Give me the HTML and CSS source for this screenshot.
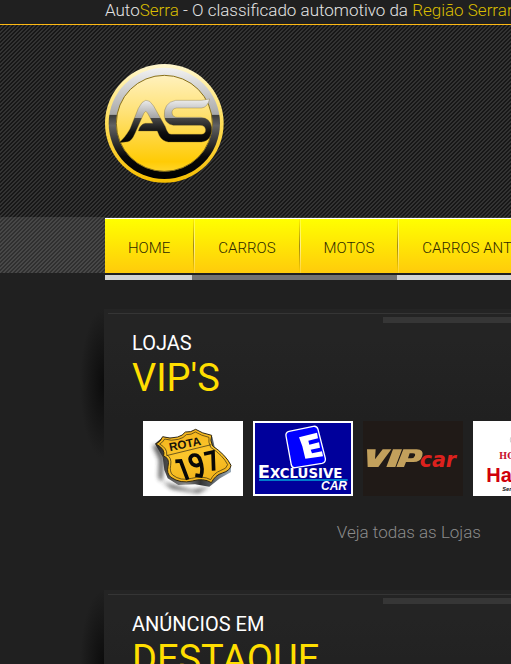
FILE: index.html
```html
<!DOCTYPE html>
<html lang="pt-BR">
<head>
<meta charset="utf-8">
<title>AutoSerra</title>
<link rel="stylesheet" href="styles.css">
</head>
<body>
<div class="topbar">Auto<span class="accent">Serra</span> - O classificado automotivo da <span class="accent">Região Serrana</span></div>
<header class="header">
  <a class="logo" href="#" aria-label="AutoSerra">
    <svg width="119" height="119" viewBox="30 27 357 357" aria-hidden="true">
      <defs>
        <linearGradient id="rim" x1="0" y1="0" x2="0" y2="1"><stop offset="0" stop-color="#fff7cf"/><stop offset=".45" stop-color="#ffe060"/><stop offset="1" stop-color="#f5bd00"/></linearGradient>
        <linearGradient id="ring" x1="0" y1="0" x2="0" y2="1"><stop offset="0" stop-color="#f2f2f2"/><stop offset=".42" stop-color="#a9a9a9"/><stop offset=".425" stop-color="#3b3b3b"/><stop offset=".52" stop-color="#626262"/><stop offset=".8" stop-color="#080808"/><stop offset="1" stop-color="#000"/></linearGradient>
        <linearGradient id="disc" x1="0" y1="0" x2="0" y2="1"><stop offset="0" stop-color="#fff1bd"/><stop offset=".4" stop-color="#ffe173"/><stop offset=".9" stop-color="#ffcb05"/><stop offset="1" stop-color="#ffd52a"/></linearGradient>
        <linearGradient id="mono" gradientUnits="userSpaceOnUse" x1="0" y1="132" x2="0" y2="265"><stop offset="0" stop-color="#f0f0f0"/><stop offset=".42" stop-color="#a5a5a5"/><stop offset=".43" stop-color="#484848"/><stop offset=".75" stop-color="#101010"/><stop offset="1" stop-color="#000"/></linearGradient>
      </defs>
      <circle cx="208" cy="205" r="178" fill="url(#rim)"/>
      <circle cx="208" cy="205" r="167" fill="url(#ring)"/>
      <circle cx="208" cy="205" r="144" fill="url(#disc)" stroke="#88701b" stroke-width="3"/>
      <g fill="url(#mono)" stroke="#75601d" stroke-opacity=".5" stroke-width="2">
        <path d="M72 263 Q91 247 105 222 L130 160 Q152 115 176 153 L211 215 Q218 238 229 238 H319 Q332 237 332 224 Q330 211 315 211 H235 Q211 207 208 184 Q205 143 242 136 H320 L344 132 Q337 158 319 159 H245 Q230 161 231 174 Q233 187 247 187 H318 Q347 190 350 217 Q351 258 319 261 H220 Q202 258 193 242 L187 228 H130 Q135 208 151 205 H174 L157 173 Q152 165 147 174 L120 235 Q110 259 98 260 Z"/>
      </g>
    </svg>
  </a>
</header>
<div class="navband">
  <nav class="nav">
    <a href="#">HOME</a><a href="#">CARROS</a><a href="#">MOTOS</a><a href="#">CARROS ANTIGOS</a>
  </nav>
</div>
<div class="underline"><span class="underline-mid"></span></div>
<main class="main">
  <section class="panel">
    <div class="tab"></div>
    <h2 class="title"><span class="title-small">LOJAS</span><span class="title-big">VIP'S</span></h2>
    <div class="stores">
      <a class="store" href="#">
        <svg viewBox="24 18 300 225" role="img" aria-label="Rota 197">
          <defs>
            <linearGradient id="shield" x1="0" y1="0" x2=".3" y2="1"><stop offset="0" stop-color="#f2ae16"/><stop offset=".55" stop-color="#fbc62c"/><stop offset="1" stop-color="#f3b51c"/></linearGradient>
            <linearGradient id="side" x1="0" y1="0" x2="1" y2="0"><stop offset="0" stop-color="#222"/><stop offset=".4" stop-color="#888"/><stop offset=".6" stop-color="#333"/><stop offset="1" stop-color="#9aabb8"/></linearGradient>
            <filter id="soft" x="-20%" y="-20%" width="140%" height="140%"><feGaussianBlur stdDeviation="6"/></filter>
          </defs>
          <path d="M24 18h300v225H24z" fill="#fff"/>
          <path d="M52 92L74 88L88 128L82 200L170 225L225 215L190 235L110 222L70 190L72 134Z" fill="#333" opacity=".75" filter="url(#soft)"/>
          <path d="M60 86L83 67L130 70L182 50L232 65L239 96Q262 118 288 150V171L255 190L223 215L180 208L130 210L98 190L88 165L83 126Z" fill="url(#side)"/>
          <path d="M63 87Q77 80 83 65Q104 73 128 66Q143 62 151 51Q167 53 182 43Q200 55 230 61Q224 76 233 93Q272 119 288 151Q286 167 262 174Q241 180 229 203Q205 188 172 198Q137 207 108 187Q94 176 99 154Q105 130 86 123Q92 102 63 87Z" fill="url(#shield)" stroke="#302710" stroke-width="3"/>
          <path d="M74 87Q84 82 89 72Q109 79 130 73Q146 69 154 59Q169 60 181 51Q199 62 222 67Q219 81 227 97Q264 121 278 149Q276 161 256 167Q237 174 227 194Q203 181 170 190Q137 199 113 180Q103 170 107 151Q111 128 95 119Q98 101 74 87ZM94 122L229 89" fill="none" stroke="#292414" stroke-width="2"/>
          <text x="105" y="109" transform="rotate(-12 105 109)" class="rota">ROTA</text>
          <g fill="none" stroke="#080808" stroke-width="11"><path d="M121 139L137 138L158 194M207 117L234 111L236 167M199 143Q187 158 172 147Q158 130 173 121Q190 116 196 137Q205 162 198 183L181 180"/></g>
        </svg>
      </a>
      <a class="store" href="#">
        <svg viewBox="24 18 300 225" role="img" aria-label="Exclusive Car">
          <path d="M24 18h300v225H24z" fill="#fff"/><path d="M30 24h288v213H30z" fill="#00009b"/>
          <path d="M132 49L205 34Q216 32 219 43L241 130Q243 142 231 145L151 158Q142 160 139 150L123 63Q121 52 132 49Z" fill="#0000ff" stroke="#fff" stroke-width="4"/>
          <path d="M162 67L216 53L219 70L190 77L193 89L222 82L225 98L197 104L201 115L231 109L234 124L181 131L172 94Z" fill="#fff"/>
          <text x="38" y="190" class="excl"><tspan class="excl-cap">E</tspan>XCLUSIVE</text>
          <path d="M42 195H308" stroke="#00a7dc" stroke-width="4"/>
          <text x="228" y="226" class="excar">CAR</text>
        </svg>
      </a>
      <a class="store" href="#">
        <svg viewBox="24 18 300 225" role="img" aria-label="VIP car">
          <path d="M24 18h300v225H24z" fill="#201a17"/>
          <path d="M36 103H62L60 133L83 103H109L70 156H38ZM114 103H141L121 156H94ZM145 103H185Q207 104 202 122Q197 142 172 141H153L147 156H124ZM164 115L159 130H168Q177 130 180 122Q182 115 174 115Z" fill="#c2a05c"/>
          <text x="194" y="156" class="vipcar">car</text>
        </svg>
      </a>
      <a class="store" href="#">
        <svg viewBox="354 18 300 225" role="img" aria-label="Honda">
          <path d="M354 18h300v225H354z" fill="#fff"/>
          <path d="M467 67Q463 75 470 84M465 79L476 88" fill="none" stroke="#bbb" stroke-width="2"/>
          <text x="432" y="131" class="honda">HO</text>
          <text x="394" y="201" class="dealer">Ha</text><text x="442" y="227" class="slogan">Sem</text>
        </svg>
      </a>
    </div>
    <a class="more" href="#">Veja todas as Lojas</a>
  </section>
  <section class="panel">
    <div class="tab"></div>
    <h2 class="title"><span class="title-small">ANÚNCIOS EM</span><span class="title-big">DESTAQUE</span></h2>
  </section>
</main>
</body>
</html>
```
FILE: styles.css
```css
* { box-sizing: border-box; }
body {
  margin: 0;
  height: 100vh;
  overflow: hidden;
  background: #202020;
  color: #fff;
  font-family: Roboto, "Liberation Sans", sans-serif;
  font-weight: 300;
}
a { color: inherit; text-decoration: none; }
.topbar {
  height: 25px;
  padding-left: 105px;
  border-bottom: 1px solid #fdb913;
  color: #e4e4e4;
  font-size: 17px;
  line-height: 20px;
  white-space: nowrap;
  overflow: hidden;
}
.accent { color: #d9bd00; }
.header {
  height: 192px;
  padding: 39px 0 0 105px;
  background: linear-gradient(135deg, #171717 25%, #333 25% 50%, #171717 50% 75%, #333 75%) 0 0 / 4px 4px;
}
.logo, .logo svg { display: block; width: 119px; }
.navband {
  padding: 1px 0 0 105px;
  background: linear-gradient(135deg, #303030 25%, #484848 25% 50%, #303030 50% 75%, #484848 75%) 0 0 / 4px 4px;
}
.nav {
  display: flex;
  height: 55px;
  border-top: 1px solid #fff;
  background: linear-gradient(#ff0, #ffcb0b);
  color: #2e2900;
  font-size: 15px;
  line-height: 58px;
  white-space: nowrap;
  overflow: hidden;
}
.nav a { flex: none; padding: 0 23px; }
.nav a + a {
  background:
    linear-gradient(#ffee00, #a18a12 50%, #ffd000) 0 0 / 1px 100% no-repeat,
    linear-gradient(#ffff30, #ffef90 50%, #ffd530) 1px 0 / 1px 100% no-repeat;
}
.nav a + a { padding-left: 25px; }
.underline {
  height: 5px;
  margin: 2px 0 29px 105px;
  padding-left: 87px;
  background: #d3d3d3;
}
.underline-mid { display: block; width: 205px; height: 5px; background: #727272; }
.main { padding-left: 104px; }
.panel {
  position: relative;
  height: 281px;
  padding: 4px 0 0 28px;
  background: linear-gradient(#242424, #242424 30px, #202020 110px);
}
.panel::before {
  content: "";
  position: absolute;
  left: -24px;
  top: 0;
  width: 24px;
  height: 150px;
  background: radial-gradient(ellipse 24px 75px at right center, #0b0b0b, #202020);
}
.tab {
  height: 10px;
  margin-left: -24px;
  border-top: 1px solid #353535;
  background: linear-gradient(#363636, #363636) 275px 3px / 100% 6px no-repeat;
}
.title { margin: 0; padding-top: 7px; font-weight: 400; white-space: nowrap; }
.title-small, .title-big { display: block; }
.title-small { font-size: 20px; line-height: 26px; }
.title-big { color: #ffde00; font-size: 38px; line-height: 44px; }
.stores { display: flex; gap: 10px; padding: 21px 0 0 11px; overflow: hidden; }
.store { flex: none; width: 100px; height: 75px; }
.store svg { display: block; width: 100%; }
.more {
  display: block;
  padding: 26px 30px 0 0;
  color: #8b8b8b;
  font-size: 17px;
  line-height: 20px;
  text-align: right;
}
.rota { font: bold 35px "Liberation Sans", sans-serif; fill: #17130a; }
.excl { font: bold 40px "DejaVu Sans", sans-serif; fill: #fff; }
.excl-cap { font-size: 54px; }
.excar { font: italic bold 36px "Liberation Sans", sans-serif; fill: #fff; }
.vipcar { font: italic bold 62px "DejaVu Sans", sans-serif; fill: #dc211d; }
.honda { font: bold 26px "DejaVu Serif", serif; fill: #c8102e; }
.dealer { font: bold 60px "Liberation Sans", sans-serif; fill: #d0000b; }
.slogan { font: italic bold 17px "Liberation Sans", sans-serif; fill: #111; }
```
